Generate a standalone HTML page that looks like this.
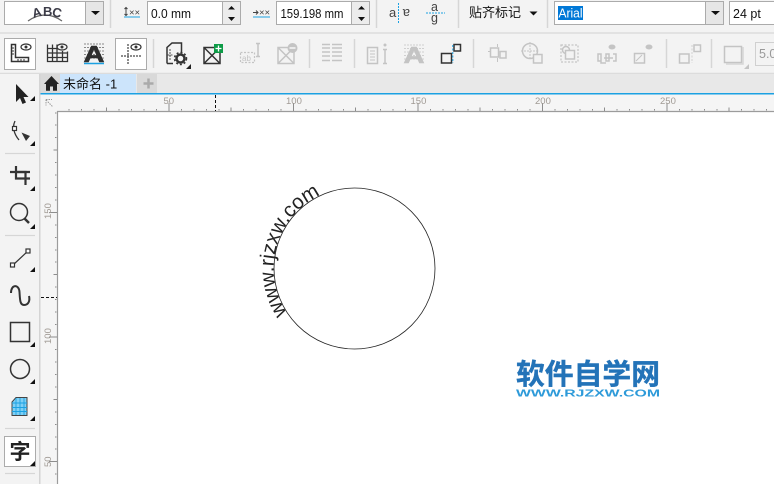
<!DOCTYPE html>
<html><head><meta charset="utf-8"><style>
html,body{margin:0;padding:0;background:#fff;width:774px;height:484px;overflow:hidden}
svg{display:block}
text{font-family:"Liberation Sans","Noto Sans CJK SC",sans-serif}
.sep{stroke:#d6d6d6;stroke-width:1.5}
.box{fill:#fff;stroke:#ababab;stroke-width:1}
.btn{fill:#e6e6e6;stroke:#ababab;stroke-width:1}
.d{fill:none;stroke:#333;stroke-width:1.5}
.g{fill:none;stroke:#c4c4c4;stroke-width:1.5}
.gd{fill:none;stroke:#c4c4c4;stroke-width:1.2;stroke-dasharray:2 1.5}
.rt{font-size:9.5px;fill:#a09a94}
.tk{stroke:#8d8d8d;stroke-width:1}
</style></head><body>
<svg width="774" height="484" viewBox="0 0 774 484" xmlns="http://www.w3.org/2000/svg">
<rect width="774" height="484" fill="#fff"/>
<!-- top rows -->
<rect width="774" height="74" fill="#f3f3f3"/>
<line x1="0" x2="774" y1="33" y2="33" stroke="#dcdcdc" stroke-width="1.5"/>
<line x1="0" x2="774" y1="73.5" y2="73.5" stroke="#dcdcdc" stroke-width="1.5"/>
<!-- row 1 -->
<rect class="box" x="4.5" y="1.5" width="81" height="23"/>
<rect class="btn" x="85.5" y="1.5" width="18" height="23"/>
<path d="M91 11h9l-4.500 4z" fill="#111"/>
<path d="M28 21Q45 9 62 21" fill="none" stroke="#666" stroke-width="1.200"/>
<text x="32" y="17" font-size="13" font-weight="bold" fill="#3c3c48" transform="rotate(-14 37 12)">A</text>
<text x="43" y="16" font-size="13" font-weight="bold" fill="#3c3c48">B</text>
<text x="52.500" y="17" font-size="13" font-weight="bold" fill="#3c3c48" transform="rotate(14 57 12)">C</text>
<line class="sep" x1="110.500" x2="110.500" y1="0" y2="28"/>
<path d="M126 8v7M124.500 9l1.500-1.500 1.500 1.500M124.500 14l1.500 1.500 1.500-1.500" fill="none" stroke="#444" stroke-width="1"/>
<text x="129" y="15.500" font-size="9.500" fill="#444">××</text>
<line x1="124" x2="140" y1="17" y2="17" stroke="#1ba1e2" stroke-width="1"/>
<rect class="box" x="147.500" y="1.500" width="75" height="23"/>
<rect x="222.500" y="1.500" width="18" height="23" fill="#ececec" stroke="#ababab"/>
<path d="M228 9.500h7l-3.500-3.500zM228 17h7l-3.500 4z" fill="#111"/>
<text x="151" y="18" font-size="13" fill="#111" textLength="40" lengthAdjust="spacingAndGlyphs">0.0 mm</text>
<path d="M253 12.500h5M256 10.500l2 2-2 2" fill="none" stroke="#444" stroke-width="1"/>
<text x="259" y="15.500" font-size="9.500" fill="#444">××</text>
<line x1="253" x2="270" y1="17" y2="17" stroke="#1ba1e2" stroke-width="1"/>
<rect class="box" x="276.500" y="1.500" width="75" height="23"/>
<rect x="351.500" y="1.500" width="18" height="23" fill="#ececec" stroke="#ababab"/>
<path d="M358 9.500h7l-3.500-3.500zM358 17h7l-3.500 4z" fill="#111"/>
<text x="280.500" y="18" font-size="13" fill="#111" textLength="63" lengthAdjust="spacingAndGlyphs">159.198 mm</text>
<line class="sep" x1="376.500" x2="376.500" y1="0" y2="28"/>
<text x="389" y="17" font-size="13" fill="#444">a</text>
<text x="403" y="17" font-size="13" fill="#444" transform="rotate(180 406.500 13)">a</text>
<line x1="398.500" x2="398.500" y1="3" y2="23" stroke="#1ba1e2" stroke-dasharray="2 1"/>
<text x="431" y="11" font-size="12.500" fill="#444">a</text>
<text x="431" y="22" font-size="12.500" fill="#444">g</text>
<line x1="426" x2="445" y1="13" y2="13" stroke="#1ba1e2" stroke-dasharray="2 1"/>
<line class="sep" x1="458.500" x2="458.500" y1="0" y2="28"/>
<text x="469" y="17" font-size="13" fill="#111">贴齐标记</text>
<path d="M529.500 11.500h8l-4 4z" fill="#111"/>
<line class="sep" x1="547.500" x2="547.500" y1="0" y2="28"/>
<rect class="box" x="554.500" y="1.500" width="152" height="23"/>
<rect class="btn" x="705.500" y="1.500" width="18" height="23"/>
<path d="M711 11h9l-4.500 4z" fill="#111"/>
<rect x="558" y="6" width="25" height="14" fill="#0078d7"/>
<text x="558.500" y="17.500" font-size="13" fill="#fff" textLength="24" lengthAdjust="spacingAndGlyphs">Arial</text>
<rect class="box" x="729.500" y="1.500" width="50" height="23"/>
<text x="733" y="18" font-size="12.500" fill="#111">24 pt</text>
<!-- row 2 -->
<rect class="box" x="4.500" y="38.500" width="31" height="31"/>
<path d="M11.500 44.500h4v13h13v4h-17z" class="d"/>
<path d="M14 48h-2M14 51h-2M14 54h-2M18 61v-2M21 61v-2M24 61v-2" stroke="#333" stroke-width="1"/>
<ellipse cx="26" cy="47" rx="5" ry="3" fill="none" stroke="#333" stroke-width="1.200"/><circle cx="26" cy="47" r="1.500" fill="#333"/>
<path d="M47.500 44.500v17h20v-10M47.500 48.500h10M47.500 53h20M47.500 57.500h20M52.500 44.500v17M57 44.500v17M62.500 51v10.500" fill="none" stroke="#333" stroke-width="1.300"/>
<ellipse cx="62" cy="47" rx="5" ry="3" fill="none" stroke="#333" stroke-width="1.200"/><circle cx="62" cy="47" r="1.500" fill="#333"/>
<path d="M84 44h20M84 47.500h20M84 51h20M84 54.500h20M84 58h20" stroke="#888" stroke-width="1" stroke-dasharray="2 1"/>
<text x="83.500" y="62" font-size="23" font-weight="bold" fill="#2e2e2e" stroke="#2e2e2e" stroke-width=".6" textLength="21" lengthAdjust="spacingAndGlyphs">A</text>
<line x1="84" x2="104" y1="63.500" y2="63.500" stroke="#1ba1e2" stroke-width="1.500"/>
<rect class="box" x="115.500" y="38.500" width="31" height="31"/>
<path d="M128 44v20M121 56h20" stroke="#666" stroke-width="1.500" stroke-dasharray="2 1"/>
<ellipse cx="136" cy="47" rx="5" ry="3" fill="none" stroke="#333" stroke-width="1.200"/><circle cx="136" cy="47" r="1.500" fill="#333"/>
<line class="sep" x1="153.500" x2="153.500" y1="39" y2="68"/>
<path d="M167 63.500v-16l5-4.500h9.500v10M167 63.500h6" class="d"/>
<path d="M170 49v12M167.500 55h5" stroke="#555" stroke-dasharray="2 1"/>
<circle cx="180.500" cy="58.500" r="4" fill="none" stroke="#333" stroke-width="2.500"/>
<circle cx="180.500" cy="58.500" r="6" fill="none" stroke="#333" stroke-width="1.500" stroke-dasharray="2 2"/>
<path d="M191 69v-5l-5 5z" fill="#222"/>
<path d="M204 47.500h16v16h-16zM204 47.500l16 16M204 63.500l16-16" class="d"/>
<rect x="214" y="44" width="9" height="9" fill="#0d9b47"/>
<path d="M218.500 45.500v6M215.500 48.500h6" stroke="#fff" stroke-width="1.300"/>
<rect class="gd" x="240.500" y="52.500" width="14" height="10"/>
<text x="242" y="61" font-size="8" fill="#c4c4c4">ab</text>
<path d="M258 44v12M256 43.500h4M256 56.500h4" class="g"/>
<path d="M278 47.500h16v16h-16zM278 47.500l16 16M278 63.500l16-16" class="g"/>
<circle cx="292.500" cy="48" r="5" fill="#c4c4c4"/><path d="M289.500 48h6" stroke="#fff" stroke-width="1.300"/>
<line class="sep" x1="309.500" x2="309.500" y1="39" y2="68"/>
<path d="M322 44.500h8M322 48h8M322 52h8M322 56h8M322 60.500h8M332 44.500h10M332 48h10M332 52h10M332 56h10M332 60.500h10" stroke="#c4c4c4" stroke-width="1.500"/>
<line class="sep" x1="354.500" x2="354.500" y1="39" y2="68"/>
<path d="M367.500 47.500h10v16h-10z" class="g"/><path d="M370 51h5M370 54h5M370 57h5M370 60h5" stroke="#c4c4c4"/>
<path d="M385 50v13M383 49.500h4M383 63.500h4" class="g"/><circle cx="385" cy="45" r="1.500" fill="#c4c4c4"/>
<path d="M404 45h20M404 48.500h20M404 52h20M404 55.500h20M404 59h20" stroke="#cfcfcf" stroke-dasharray="2 1"/>
<text x="403.500" y="63" font-size="23" font-weight="bold" fill="#c4c4c4" stroke="#c4c4c4" stroke-width=".6" textLength="21" lengthAdjust="spacingAndGlyphs">A</text>
<rect x="441.500" y="53.500" width="10" height="9.500" fill="none" stroke="#333" stroke-width="1.500"/>
<rect x="454" y="44.500" width="6.500" height="6.500" fill="none" stroke="#333" stroke-width="1.500"/>
<path d="M452.800 45v18" stroke="#1ba1e2" stroke-dasharray="2 1.500"/>
<line class="sep" x1="473.500" x2="473.500" y1="39" y2="68"/>
<rect class="g" x="490.500" y="48" width="8" height="9"/><rect class="g" x="500" y="51.500" width="6" height="6.500"/>
<path d="M488 51.500h3M497.500 44v3M497.500 58v4" stroke="#c4c4c4"/>
<circle cx="530" cy="51" r="7.500" class="g"/><path d="M530 42v18M521 51h18" stroke="#c4c4c4" stroke-dasharray="2 1"/>
<rect x="533.500" y="54.500" width="8.500" height="8.500" fill="#f3f3f3" stroke="#c4c4c4" stroke-width="1.500"/>
<rect class="gd" x="561" y="45" width="17" height="17"/><circle cx="566" cy="50" r="3.500" class="g"/>
<rect x="565.500" y="50.500" width="9" height="8.500" fill="#f3f3f3" stroke="#c4c4c4" stroke-width="1.500"/>
<path d="M598 54h3v7h-3zM606 54h3v7h-3zM613 54h3v7h-3M604 58h9M601 58v5h5" class="g"/>
<ellipse cx="612" cy="47" rx="3.500" ry="2.500" fill="#c4c4c4"/>
<rect class="g" x="634.500" y="53.500" width="10" height="9.500"/><path d="M636 61l6-6" stroke="#c4c4c4"/>
<ellipse cx="649" cy="47" rx="3.500" ry="2.500" fill="#c4c4c4"/>
<line class="sep" x1="666.500" x2="666.500" y1="39" y2="68"/>
<rect class="g" x="679.500" y="54" width="9.500" height="9"/><rect class="g" x="694" y="45" width="6.500" height="6.500"/>
<path d="M692 45v18" stroke="#d0d0d0" stroke-dasharray="2 1.500"/>
<line class="sep" x1="711.500" x2="711.500" y1="39" y2="68"/>
<rect class="g" x="724.500" y="46.500" width="17" height="16"/>
<path d="M743 47v17h-17" stroke="#d6d6d6" stroke-width="1.500" fill="none"/>
<path d="M749 69v-5l-5 5z" fill="#c4c4c4"/>
<rect x="755.500" y="42.500" width="30" height="23" fill="#f3f3f3" stroke="#d0d0d0"/>
<text x="759" y="58" font-size="12.500" fill="#999">5.0</text>
<!-- tab row -->
<rect x="0" y="74" width="774" height="20" fill="#e8e8e8"/>
<rect x="40" y="74" width="20" height="19" fill="#d9d9d9"/>
<path d="M44 84l7.500-8 7.500 8h-2v6.800h-4v-4.300h-3v4.300h-4v-6.800z" fill="#222"/>
<rect x="60" y="74" width="76" height="19" fill="#cce4fb"/>
<text x="63" y="88.500" font-size="13" fill="#111">未命名 -1</text>
<rect x="137" y="74" width="20" height="19" fill="#d9d9d9"/>
<path d="M148.500 78.500v10M143.500 83.500h10" stroke="#aaa" stroke-width="2.500"/>
<rect x="40" y="93" width="734" height="1.500" fill="#1ba1e2"/>
<!-- rulers -->
<rect x="40" y="94.500" width="734" height="17" fill="#f5f5f5"/>
<rect x="40" y="94.500" width="17" height="390" fill="#f5f5f5"/>
<rect x="57" y="111.500" width="717" height="373" fill="#fff"/>
<path d="M57 111.500H774" stroke="#9c9c9c" stroke-width="1.200"/>
<path d="M57.500 111V484" stroke="#9c9c9c" stroke-width="1.200"/>
<!-- left toolbar -->
<rect x="0" y="74" width="39.500" height="410" fill="#f3f3f3"/>
<rect x="39" y="74" width="1.500" height="410" fill="#d4d4d4"/>
<!-- ruler origin icon -->
<path d="M46 99.500h6M46 99.500v6M46 100l7 7" stroke="#999" stroke-width="1" stroke-dasharray="1.500 1" fill="none"/>
<!-- top ruler ticks -->
<g>
<path class="tk" d="M169 103v8M293.500 103v8M418 103v8M542.500 103v8M667 103v8"/>
<path class="tk" d="M106.500 107.500v3.500M231 107.500v3.500M355.500 107.500v3.500M480 107.500v3.500M604.500 107.500v3.500M729 107.500v3.500"/>
<path d="M69 109v1.500M81.500 109v1.500M94 109v1.500M119 109v1.500M131.500 109v1.500M144 109v1.500M156.500 109v1.500M181.500 109v1.500M194 109v1.500M206.500 109v1.500M219 109v1.500M243.500 109v1.500M256 109v1.500M268.500 109v1.500M281 109v1.500M306 109v1.500M318.500 109v1.500M331 109v1.500M343.500 109v1.500M368 109v1.500M380.500 109v1.500M393 109v1.500M405.500 109v1.500M430.500 109v1.500M443 109v1.500M455.500 109v1.500M468 109v1.500M492.500 109v1.500M505 109v1.500M517.500 109v1.500M530 109v1.500M555 109v1.500M567.500 109v1.500M580 109v1.500M592.500 109v1.500M617 109v1.500M629.500 109v1.500M642 109v1.500M654.500 109v1.500M679.500 109v1.500M692 109v1.500M704.500 109v1.500M717 109v1.500M741.500 109v1.500M754 109v1.500M766.500 109v1.500" stroke="#8d8d8d"/>
</g>
<text class="rt" x="163.500" y="104">50</text>
<text class="rt" x="286" y="104">100</text>
<text class="rt" x="410.500" y="104">150</text>
<text class="rt" x="535" y="104">200</text>
<text class="rt" x="660" y="104">250</text>
<path d="M215.500 95v16" stroke="#111" stroke-dasharray="3 2"/>
<!-- left ruler ticks -->
<path class="tk" d="M49 212.500h8M49 337h8M49 461.500h8"/>
<path class="tk" d="M53.500 150h3.500M53.500 274.500h3.500M53.500 399.500h3.500"/>
<path d="M55 113h1.500M55 125h1.500M55 137.500h1.500M55 162.500h1.500M55 175h1.500M55 187.500h1.500M55 200h1.500M55 225h1.500M55 237.500h1.500M55 250h1.500M55 262h1.500M55 287h1.500M55 299.500h1.500M55 312h1.500M55 324.500h1.500M55 349.500h1.500M55 362h1.500M55 374.500h1.500M55 387h1.500M55 412h1.500M55 424.500h1.500M55 437h1.500M55 449h1.500M55 474h1.500" stroke="#8d8d8d"/>
<text class="rt" transform="translate(51 219) rotate(-90)">150</text>
<text class="rt" transform="translate(51 344) rotate(-90)">100</text>
<text class="rt" transform="translate(51 467) rotate(-90)">50</text>
<path d="M41 297.500h16" stroke="#111" stroke-dasharray="3 2"/>
<!-- toolbox -->
<path d="M16 84l0 18 4-4 2.500 6 3.500-1.500-2.500-5.500h5z" fill="#222"/>
<path d="M35 101v-5l-5 5z" fill="#111"/>
<path d="M15 121c-3 6-1 13 4 19" fill="none" stroke="#333" stroke-width="1.300"/>
<rect x="12.500" y="126.500" width="4" height="4" fill="#fff" stroke="#333" stroke-width="1.200"/>
<path d="M21.500 132.500l8.500 3.500-4 5z" fill="#333"/>
<path d="M35 146v-5l-5 5z" fill="#111"/>
<line x1="5" x2="35" y1="153.500" y2="153.500" stroke="#d6d6d6" stroke-width="1.200"/>
<path d="M10 172h20M16 166v12.500h14" fill="none" stroke="#333" stroke-width="2.200"/>
<path d="M16 172h9.500v13" fill="none" stroke="#333" stroke-width="2.200"/>
<path d="M35 191v-5l-5 5z" fill="#111"/>
<circle cx="19" cy="212" r="8.500" fill="none" stroke="#333" stroke-width="1.500"/>
<path d="M24.500 218.500l4.500 4.500" stroke="#333" stroke-width="2.500"/>
<path d="M35 229v-5l-5 5z" fill="#111"/>
<line x1="5" x2="35" y1="235.500" y2="235.500" stroke="#d6d6d6" stroke-width="1.200"/>
<path d="M13 265l15-14" stroke="#333" stroke-width="1.200"/>
<rect x="10.500" y="263" width="4" height="4" fill="#fff" stroke="#333" stroke-width="1.200"/>
<rect x="26" y="249" width="4" height="4" fill="#fff" stroke="#333" stroke-width="1.200"/>
<path d="M35 272v-5l-5 5z" fill="#111"/>
<path d="M11 293C11 284 19 284 19.500 292C20 300 20 305 24 305C29 305 30 300 29 296" fill="none" stroke="#333" stroke-width="2"/>
<rect x="10.500" y="322.500" width="19" height="19" fill="none" stroke="#333" stroke-width="1.500"/>
<path d="M35 347v-5l-5 5z" fill="#111"/>
<circle cx="20" cy="369" r="9.500" fill="none" stroke="#333" stroke-width="1.500"/>
<path d="M35 384v-5l-5 5z" fill="#111"/>
<path d="M12 402l4-4.500h11v18h-15z" fill="#7fd0f5" stroke="#444" stroke-width="1"/>
<path d="M12 403h15M12 407.500h15M12 411.500h15M16 398v17M20 398v17M24 398v17" stroke="#1ba1e2" stroke-width=".9"/>
<path d="M35 421v-5l-5 5z" fill="#111"/>
<line x1="5" x2="35" y1="428.500" y2="428.500" stroke="#d6d6d6" stroke-width="1.200"/>
<rect class="box" x="4.500" y="436.500" width="31" height="30"/>
<text x="9.500" y="459" font-size="21" font-weight="bold" fill="#222">字</text>
<path d="M35 466v-5l-5 5z" fill="#111"/>
<line x1="5" x2="35" y1="473.500" y2="473.500" stroke="#d6d6d6" stroke-width="1.200"/>
<!-- canvas -->
<circle cx="354.500" cy="268.500" r="80.500" fill="none" stroke="#222" stroke-width=".8"/>
<path id="arc" d="M287 313A81 81 0 0 1 328 192" fill="none"/>
<text font-size="20.500" fill="#222"><textPath href="#arc">www.rjzxw.com</textPath></text>
<text x="516" y="384" font-size="28.500" font-weight="bold" fill="#2373b8" textLength="144" lengthAdjust="spacingAndGlyphs" stroke="#2373b8" stroke-width=".4">软件自学网</text>
<text x="516" y="396.500" font-size="10" font-weight="bold" fill="#2d9ad9" textLength="144" lengthAdjust="spacingAndGlyphs">WWW.RJZXW.COM</text>
</svg>
</body></html>
